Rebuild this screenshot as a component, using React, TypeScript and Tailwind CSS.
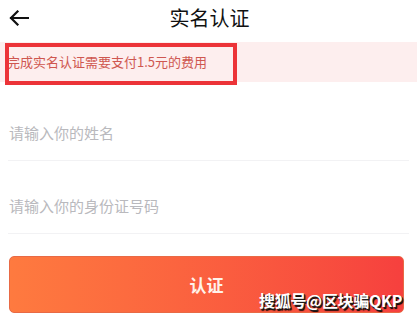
import React from 'react';

const font = { fontFamily: '"Noto Sans CJK SC", "Noto Sans", sans-serif' };

const App: React.FC = () => {
  return (
    <div className="w-[417px] h-[320px] bg-white relative overflow-hidden" style={font}>
      {/* header */}
      <div className="h-[36px] flex items-center relative">
        <svg className="absolute left-[9px] top-[10px]" width="20" height="16" viewBox="0 0 20 16">
          <path d="M19 8H2M8.5 1.5L2 8l6.5 6.5" fill="none" stroke="#111" strokeWidth="2.2" strokeLinecap="square" />
        </svg>
        <div className="flex-1 text-center text-[20px] text-[#111] leading-none pl-[2px]">实名认证</div>
      </div>

      {/* notice */}
      <div className="mt-[6px] h-[40px] bg-[#fdeeee] flex items-center pl-[7px] pb-[1px] relative">
        <span className="text-[13px] text-[#cf5750] leading-none">完成实名认证需要支付1.5元的费用</span>
        <div className="absolute left-[5px] top-[1px] w-[232px] h-[42px] border-[4px] border-[#ec3338]" />
      </div>

      {/* inputs */}
      <div className="px-[8px] mt-[22px]">
        <div className="h-[57px] border-b border-[#f2f2f4] flex items-end pl-[1px] pb-[16px]">
          <span className="text-[15px] text-[#b9b9bd]">请输入你的姓名</span>
        </div>
        <div className="h-[73px] border-b border-[#f2f2f4] flex items-end pl-[1px] pb-[16px]">
          <span className="text-[15px] text-[#b9b9bd]">请输入你的身份证号码</span>
        </div>
      </div>

      {/* button */}
      <div className="px-[9px] mt-[22px] pr-[13px]">
        <div className="h-[57px] rounded-[5px] bg-gradient-to-r from-[#fe7a3f] to-[#f6403e] border border-[#e86a45] flex items-center justify-center">
          <span className="text-[17px] font-bold text-[#fff3ea]">认证</span>
        </div>
      </div>

      {/* watermark */}
      <div
        className="absolute left-[259px] top-[292px] text-[16px] font-bold text-white leading-none tracking-[-0.3px]"
        style={{ textShadow: '1px 1px 0 #222, 1.5px 1.5px 1px #000' }}
      >
        搜狐号@区块骗QKP
      </div>
    </div>
  );
};

export default App;
